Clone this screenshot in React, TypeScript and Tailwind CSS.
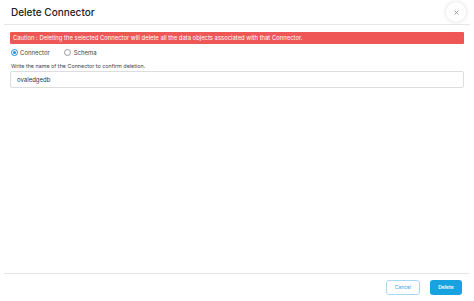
import React from "react";

export default function App() {
  return (
    <div className="w-[474px] h-[301px] bg-white flex flex-col relative" style={{ fontFamily: "Inter, 'Noto Sans', sans-serif" }}>
      <div className="h-[25px] flex items-center mx-[4px] pl-[7px] border-b border-[#e6e6e6]">
        <div className="text-[10px] font-medium text-[#222]">Delete Connector</div>
      </div>
      <button className="absolute right-[8px] top-[2px] w-[20px] h-[20px] rounded-full bg-white shadow-[0_0_4px_rgba(0,0,0,0.15)] flex items-center justify-center">
        <svg width="5" height="5" viewBox="0 0 5 5">
          <path d="M0.5 0.5 L4.5 4.5 M4.5 0.5 L0.5 4.5" stroke="#888" strokeWidth="0.8" />
        </svg>
      </button>
      <div className="px-[10px] flex flex-col flex-1">
        <div className="mt-[7px] h-[12px] bg-[#ef5656] rounded-[1px] text-white text-[5.9px] flex items-center pl-[3px]">
          Caution : Deleting the selected Connector will delete all the data objects associated with that Connector.
        </div>
        <div className="mt-[4px] flex items-center h-[9px] text-[6px] text-[#444]">
          <span className="w-[7px] h-[7px] rounded-full border border-[#1a8fd8] flex items-center justify-center ml-[1px]">
            <span className="w-[3px] h-[3px] rounded-full bg-[#1a8fd8]" />
          </span>
          <span className="ml-[2px]">Connector</span>
          <span className="ml-[14px] w-[7px] h-[7px] rounded-full border border-[#999]" />
          <span className="ml-[3px]">Schema</span>
        </div>
        <div className="mt-[5px] text-[5.4px] text-[#444] pl-[1px]">Write the name of the Connector to confirm deletion.</div>
        <div className="mt-[1px] h-[17px] border border-[#ddd] rounded-[2px] flex items-center pl-[6px] text-[6px] text-[#333]">ovaledgedb</div>
        <div className="flex-1" />
      </div>
      <div className="mx-[4px] border-t border-[#e6e6e6] h-[28px] flex items-center justify-end gap-[10px] pr-[8px]">
        <button className="w-[34px] h-[15px] rounded-[3px] border border-[#a9d9f2] text-[#3a9fd8] text-[5px] flex items-center justify-center">Cancel</button>
        <button className="w-[32px] h-[15px] rounded-[3px] bg-[#17a2e0] text-white text-[5px] font-semibold flex items-center justify-center">Delete</button>
      </div>
    </div>
  );
}
